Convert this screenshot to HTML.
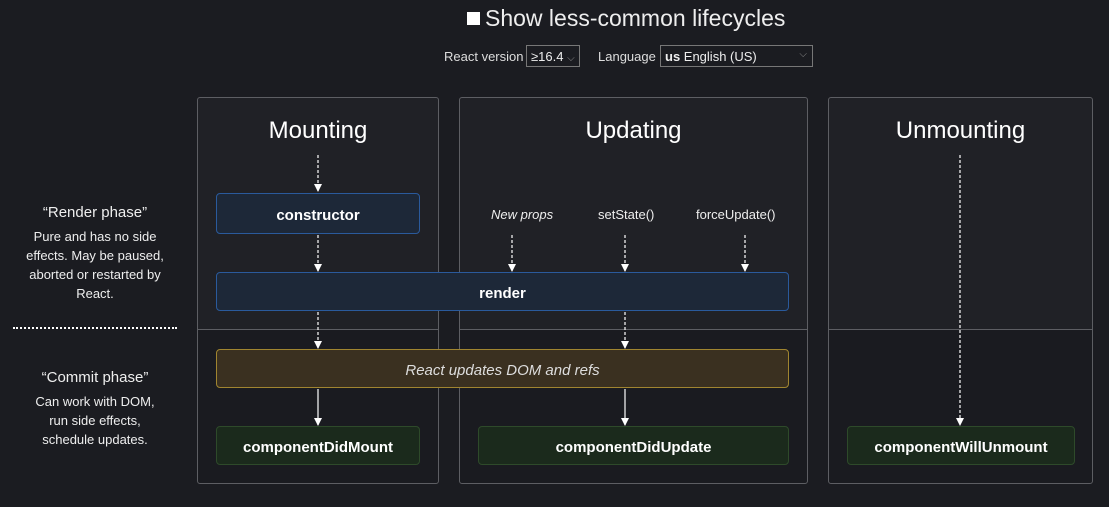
<!DOCTYPE html>
<html><head><meta charset="utf-8"><style>
*{box-sizing:border-box;margin:0;padding:0}
body{width:1109px;height:507px;background:#1b1c21;color:#f0f0f0;font-family:"Liberation Sans",sans-serif;position:relative;overflow:hidden}
.a{position:absolute}
.panel{position:absolute;top:97px;height:387px;border:1px solid #5d5e63;border-radius:3px;background:linear-gradient(#202126 0,#202126 231px,#5d5e63 231px,#5d5e63 232px,#1a1b20 232px)}
.title{position:absolute;top:117px;font-size:24px;text-align:center;color:#fff}
.box{position:absolute;border-radius:4px;display:flex;align-items:center;justify-content:center;font-weight:bold;font-size:15px;color:#fff;padding-top:3px}
.blue{background:#1d2838;border:1px solid #2a5a9c}
.green{background:#1b2a1c;border:1px solid #2e4a2a}
.gold{background:#3a3020;border:1px solid #a08530;font-weight:normal;font-style:italic;color:#ddd}
.side{position:absolute;left:20px;width:150px;text-align:center;font-size:13px;line-height:19px;color:#eee}
.side b{display:block;font-weight:normal;font-size:15px;margin-bottom:5px}
.lbl{position:absolute;top:207px;font-size:13px;color:#eee}
.sel{position:absolute;top:45px;height:22px;border:1px solid #777;font-size:13px;padding:3px 4px;color:#eee}
</style></head><body>
<div class="a" style="left:467px;top:12px;width:13px;height:13px;background:#fff"></div>
<div class="a" style="left:485px;top:5px;font-size:23px;color:#eee">Show less-common lifecycles</div>
<div class="a" style="left:444px;top:49px;font-size:13px;color:#ddd">React version</div>
<div class="sel" style="left:526px;width:54px">≥16.4 <span style="color:#888;font-size:10px">⌵</span></div>
<div class="a" style="left:598px;top:49px;font-size:13px;color:#ddd">Language</div>
<div class="sel" style="left:660px;width:153px"><b>us</b> English (US)<span style="position:absolute;right:5px;color:#888;font-size:10px">⌵</span></div>

<div class="panel" style="left:197px;width:242px"></div>
<div class="panel" style="left:459px;width:349px"></div>
<div class="panel" style="left:828px;width:265px"></div>
<div class="title" style="left:197px;width:242px">Mounting</div>
<div class="title" style="left:459px;width:349px">Updating</div>
<div class="title" style="left:828px;width:265px">Unmounting</div>

<div class="side" style="top:203px"><b>“Render phase”</b>Pure and has no side effects. May be paused, aborted or restarted by React.</div>
<div class="a" style="left:13px;top:327px;width:164px;border-top:2px dotted #fff"></div>
<div class="side" style="top:368px"><b>“Commit phase”</b>Can work with DOM,<br>run side effects,<br>schedule updates.</div>

<div class="lbl" style="left:491px;font-style:italic">New props</div>
<div class="lbl" style="left:598px">setState()</div>
<div class="lbl" style="left:696px">forceUpdate()</div>

<svg class="a" style="left:0;top:0" width="1109" height="507">
<defs><marker id="m" markerWidth="8" markerHeight="8" refX="4" refY="7" orient="0" markerUnits="userSpaceOnUse"><path d="M0,0 L8,0 L4,8 Z" fill="#fff"/></marker></defs>
<g stroke="#fff" stroke-width="1.2" fill="none" marker-end="url(#m)">
<line x1="318" y1="155" x2="318" y2="191" stroke-dasharray="3,2"/>
<line x1="318" y1="235" x2="318" y2="271" stroke-dasharray="3,2"/>
<line x1="318" y1="312" x2="318" y2="348" stroke-dasharray="3,2"/>
<line x1="318" y1="389" x2="318" y2="425"/>
<line x1="512" y1="235" x2="512" y2="271" stroke-dasharray="3,2"/>
<line x1="625" y1="235" x2="625" y2="271" stroke-dasharray="3,2"/>
<line x1="745" y1="235" x2="745" y2="271" stroke-dasharray="3,2"/>
<line x1="625" y1="312" x2="625" y2="348" stroke-dasharray="3,2"/>
<line x1="625" y1="389" x2="625" y2="425"/>
<line x1="960" y1="155" x2="960" y2="425" stroke-dasharray="3,2"/>
</g></svg>

<div class="box blue" style="left:216px;top:193px;width:204px;height:41px">constructor</div>
<div class="box blue" style="left:216px;top:272px;width:573px;height:39px">render</div>
<div class="box gold" style="left:216px;top:349px;width:573px;height:39px">React updates DOM and refs</div>
<div class="box green" style="left:216px;top:426px;width:204px;height:39px">componentDidMount</div>
<div class="box green" style="left:478px;top:426px;width:311px;height:39px">componentDidUpdate</div>
<div class="box green" style="left:847px;top:426px;width:228px;height:39px">componentWillUnmount</div>
</body></html>
